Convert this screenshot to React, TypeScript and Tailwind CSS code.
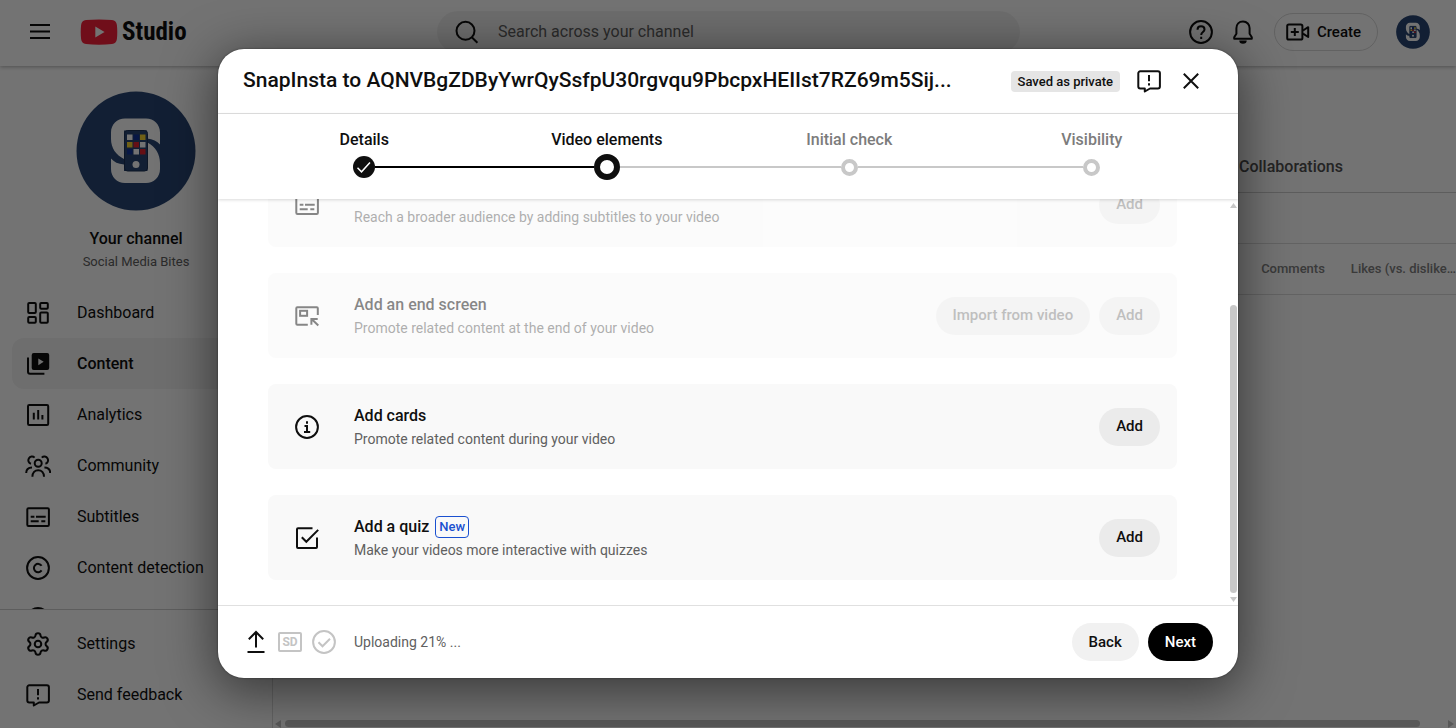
import React, { FC, ReactNode } from 'react';
import { Settings } from 'lucide-react';

type IconProps = {
	children: ReactNode;
	className?: string;
};

const Icon: FC<IconProps> = ({ children, className = '' }) => (
	<svg
		viewBox="0 0 26 26"
		className={`size-[26px] shrink-0 ${className}`}
		fill="none"
		stroke="currentColor"
		strokeWidth="2"
		aria-hidden="true"
	>
		{children}
	</svg>
);

const DashboardIcon = () => (
	<Icon>
		<rect x="3.2" y="3" width="7.6" height="10" rx="1" />
		<rect x="15.2" y="3" width="7.6" height="5.8" rx="1" />
		<rect x="3.2" y="17" width="7.6" height="5.8" rx="1" />
		<rect x="15.2" y="12.4" width="7.6" height="10.4" rx="1" />
	</Icon>
);

const ContentIcon = () => (
	<Icon>
		<path
			fill="currentColor"
			stroke="none"
			fillRule="evenodd"
			d="M8.7 2h13.5a2 2 0 0 1 2 2v13a2 2 0 0 1-2 2H8.7a2 2 0 0 1-2-2V4a2 2 0 0 1 2-2Zm4.6 5.4v6.8l5.4-3.4Z"
		/>
		<path d="M3 6.5v14.2a2 2 0 0 0 2 2h14.4" />
	</Icon>
);

const AnalyticsIcon = () => (
	<Icon>
		<rect x="3" y="3" width="20.2" height="20" rx="1.2" />
		<path d="M8.8 10.7v6.8M13.2 8v9.5M17.4 13v4.5" />
	</Icon>
);

const CommunityIcon = () => (
	<Icon>
		<circle cx="13.2" cy="10.2" r="3.5" />
		<path d="M7.4 23.8c0-4.2 2.5-6.6 5.8-6.6s5.8 2.4 5.8 6.6" />
		<path d="M9.6 4.6A3.7 3.7 0 1 0 6 10.8M16.8 4.6a3.7 3.7 0 1 1 3.600 6.200" />
		<path d="M1.200 20c0-3.400 2-5.600 5.800-5.600M25.200 20c0-3.400-2-5.600-5.800-5.600" />
	</Icon>
);

const SubtitlesIcon = () => (
	<Icon>
		<rect x="2.3" y="4.3" width="21.6" height="17.6" rx="1.2" />
		<path d="M5.7 12.8h3.7M11 12.8h9.7M5.7 17.3h8M16.3 17.3h4" />
	</Icon>
);

const CopyrightIcon = () => (
	<Icon>
		<circle cx="13" cy="13" r="10.9" />
		<path d="M16.6 10.7a4.2 4.2 0 1 0 0 4.7" />
	</Icon>
);

const FeedbackIcon = () => (
	<Icon>
		<path
			strokeLinejoin="round"
			d="M4.3 3.3h17.6a2 2 0 0 1 2 2v13.2a2 2 0 0 1-2 2H14l-5.2 3v-3H4.3a2 2 0 0 1-2-2V5.3a2 2 0 0 1 2-2Z"
		/>
		<path d="M13 7v6.2M13 15.2v2.2" />
	</Icon>
);

const HelpIcon = () => (
	<Icon>
		<circle cx="13" cy="13" r="10.9" />
		<path d="M9.5 10.7c0-2 1.5-3.4 3.5-3.4s3.5 1.3 3.5 3.2c0 2.5-3.3 2.6-3.3 5.4M13.2 17.7V20" />
	</Icon>
);

const BellIcon = () => (
	<Icon>
		<path
			strokeLinejoin="round"
			d="M13 2.6c-4 0-6.6 2.8-6.6 6.7v5.5l-2.2 3.4v1.6h17.6v-1.6l-2.2-3.4V9.3c0-3.9-2.6-6.7-6.6-6.7Z"
		/>
		<path fill="currentColor" stroke="none" d="M9.3 21.5h7.4a3.7 3.2 0 0 1-7.4 0Z" />
	</Icon>
);

const CreateIcon = () => (
	<Icon>
		<rect x="2.2" y="5.5" width="15.2" height="15" rx="1.6" />
		<path d="M9.8 9v8M5.8 13h8" />
		<path strokeLinejoin="round" d="M18 11.5l5.2-3.3v9.8L18 14.7" />
	</Icon>
);

const SearchIcon = () => (
	<Icon>
		<circle cx="11.5" cy="11.8" r="9" />
		<path d="M17.8 18.2l5.6 5.6" />
	</Icon>
);

const EndScreenIcon = () => (
	<Icon>
		<path d="M23.8 12V5.3a1 1 0 0 0-1-1H3.3a1 1 0 0 0-1 1v15.4a1 1 0 0 0 1 1h10.5" />
		<rect x="6.1" y="7.8" width="7" height="5" />
		<path d="M17.4 21.8v-5.9h6.3M17.6 16.1l6.7 6.3" />
	</Icon>
);

const InfoIcon = () => (
	<Icon>
		<circle cx="13" cy="13" r="10.9" />
		<path d="M13 7.3v2.4M10.5 12H13v6.3M10 18h6.2" />
	</Icon>
);

const QuizIcon = () => (
	<Icon>
		<path d="M18.5 3.3H4a1 1 0 0 0-1 1V22a1 1 0 0 0 1 1h18a1 1 0 0 0 1-1v-9.5" />
		<path d="M7.8 12.3l4.5 4.5L24.2 4.9" />
	</Icon>
);

const Logo: FC<{ className: string }> = ({ className }) => (
	<svg viewBox="0 0 120 120" className={`shrink-0 ${className}`} aria-hidden="true">
		<circle cx="60" cy="60" r="59.5" fill="#294673" />
		<path
			fill="#fff"
			d="M49 27.500h21c8 0 14 6 14 14v12c-3-3.500-7-5.500-13-6v-8H48v28.500c-8-4-13-11-13-20v-6.500c0-8 6-14 14-14Z"
		/>
		<path
			fill="#fff"
			d="M35 67.500c3 3.500 7 5.500 13 6V80h23.500V51.500C79.500 56 84 63 84 72v6c0 8-6 14-14 14H49c-8 0-14-6-14-14Z"
		/>
		<rect x="48.5" y="39.5" width="23" height="40.5" rx="3" fill="#294673" stroke="#1b3155" />
		<path fill="#fff" d="M51 43.500h5.500v5.500H51zM64 51h5.500v5.500H64zM57.500 58H63v5.500h-5.500z" />
		<path fill="#f5d432" d="M64 43.500h5.500v5.500H64zM51 51h5.500v5.500H51z" />
		<path fill="#e0242f" d="M57.500 51H63v5.500h-5.500zM64 58h5.500v5.500H64z" />
		<path fill="#10339a" d="M57.500 43.500H63v5.500h-5.500zM51 58h5.500v5.500H51z" />
		<circle cx="60" cy="73.5" r="3.5" fill="#fff" />
	</svg>
);

const TopBar = () => (
	<header className="relative z-10 flex h-[66px] shrink-0 items-center bg-white pr-[26px] pb-[2px] pl-[27px] shadow-[0_1px_4px_rgba(0,0,0,0.3)]">
		<div className="flex flex-1 items-center">
			<button type="button" aria-label="Menu">
				<Icon>
					<path d="M3 6h20M3 12.5h20M3 19h20" />
				</Icon>
			</button>
			<a href="#" className="ml-[27px] flex items-center gap-1">
				<svg viewBox="0 0 38 26" className="h-[26px] w-[38px]" aria-hidden="true">
					<path
						fill="#f8203a"
						d="M6 .9C14 .2 24 .2 32 .9c3 .3 4.500 2 4.900 5 .5 4.500.5 9.700 0 14.200-.4 3-1.900 4.700-4.900 5-8 .7-18 .7-26 0-3-.3-4.500-2-4.900-5-.5-4.500-.5-9.700 0-14.200.4-3 1.900-4.700 4.900-5Z"
					/>
					<path fill="#fff" d="M15.3 7.5v11l9.300-5.500Z" />
				</svg>
				<span className="font-['Roboto_Condensed','Liberation_Sans_Narrow','Roboto',sans-serif] text-[25px] leading-8 font-bold">
					Studio
				</span>
			</a>
		</div>
		<div className="flex h-[42px] w-[583px] items-center gap-[18px] rounded-full bg-[#f2f2f2] pl-[17px]">
			<SearchIcon />
			<input
				type="search"
				aria-label="Search across your channel"
				placeholder="Search across your channel"
				className="flex-1 bg-transparent text-base outline-none placeholder:text-[#606060]"
			/>
		</div>
		<div className="flex flex-1 items-center justify-end gap-[18px]">
			<div className="flex items-center gap-4">
				<button type="button" aria-label="Help">
					<HelpIcon />
				</button>
				<button type="button" aria-label="Notifications">
					<BellIcon />
				</button>
			</div>
			<button
				type="button"
				className="flex h-[38px] items-center gap-[6px] rounded-full border border-[#d9d9d9] pr-4 pl-[10px] text-[15px] font-medium"
			>
				<CreateIcon />
				Create
			</button>
			<button type="button" aria-label="Account">
				<Logo className="size-[34px]" />
			</button>
		</div>
	</header>
);

type NavItemProps = {
	icon: ReactNode;
	label: string;
	active?: boolean;
};

const NavItem: FC<NavItemProps> = ({ icon, label, active }) => (
	<a
		href="#"
		className={`mx-3 flex h-[51px] shrink-0 items-center gap-[26px] rounded-xl pl-[13px] text-base ${
			active ? 'bg-[#f4f4f4] font-medium' : ''
		}`}
	>
		{icon}
		{label}
	</a>
);

const Sidebar = () => (
	<aside className="flex w-[273px] shrink-0 flex-col border-r border-[#dcdcdc]">
		<nav className="flex min-h-0 flex-1 flex-col overflow-hidden pt-[25px]">
			<div className="mb-[14px] flex shrink-0 flex-col items-center">
				<Logo className="size-[120px]" />
				<div className="mt-4 text-base font-medium">Your channel</div>
				<div className="text-[13px] leading-[22px] text-[#606060]">Social Media Bites</div>
			</div>
			<NavItem icon={<DashboardIcon />} label="Dashboard" />
			<NavItem icon={<ContentIcon />} label="Content" active />
			<NavItem icon={<AnalyticsIcon />} label="Analytics" />
			<NavItem icon={<CommunityIcon />} label="Community" />
			<NavItem icon={<SubtitlesIcon />} label="Subtitles" />
			<NavItem icon={<CopyrightIcon />} label="Content detection" />
			<NavItem icon={<CopyrightIcon />} label="" />
		</nav>
		<nav className="border-t border-[#cfcfcf] py-2">
			<NavItem
				icon={<Settings size={26} strokeWidth={1.9} className="shrink-0" />}
				label="Settings"
			/>
			<NavItem icon={<FeedbackIcon />} label="Send feedback" />
		</nav>
	</aside>
);

const ContentTable = () => (
	<main className="flex min-w-0 flex-1 flex-col overflow-hidden">
		<div className="flex h-[127px] items-end justify-end border-b border-[#cfcfcf] pr-[113px] pb-[13px] text-base font-medium text-[#505050]">
			<button type="button">Collaborations</button>
		</div>
		<div className="h-[51px] border-b border-[#dcdcdc]" />
		<table className="w-full border-b border-[#dcdcdc] text-left text-[13px] text-[#808080]">
			<thead>
				<tr className="h-[50px]">
					<th className="pr-[26px] text-right font-medium">Comments</th>
					<th className="w-[105px] font-medium whitespace-nowrap">Likes (vs. dislike…</th>
				</tr>
			</thead>
		</table>
		<div className="mt-auto flex h-[9px] items-center gap-1 px-[2px] text-[#c4c4c4]">
			<svg viewBox="0 0 6 8" className="h-2 w-[6px]" fill="currentColor" aria-hidden="true">
				<path d="M6 0v8L0 4Z" />
			</svg>
			<div className="mr-6 h-[7px] flex-1 rounded-full bg-current" />
			<svg viewBox="0 0 6 8" className="h-2 w-[6px]" fill="currentColor" aria-hidden="true">
				<path d="M0 0v8l6-4Z" />
			</svg>
		</div>
	</main>
);

type StepProps = {
	label: string;
	marker: ReactNode;
	left: string;
	right: string;
	muted?: boolean;
};

const Step: FC<StepProps> = ({ label, marker, left, right, muted }) => (
	<li className={`text-center text-base font-medium ${muted ? 'text-[#7c7c7c]' : ''}`}>
		{label}
		<div className="flex h-[30px] items-center">
			<div className={`h-[2px] flex-1 ${left}`} />
			{marker}
			<div className={`h-[2px] flex-1 ${right}`} />
		</div>
	</li>
);

const PendingMarker = () => (
	<div className="size-[17px] rounded-full border-4 border-[#c8c8c8]" />
);

const Stepper = () => (
	<ol className="relative z-10 grid h-[85px] shrink-0 grid-cols-4 bg-white px-[25px] pt-[14px] shadow-[0_1px_3px_rgba(0,0,0,0.15)]">
		<Step
			label="Details"
			left="bg-transparent"
			right="bg-black"
			marker={
				<svg viewBox="0 0 22 22" className="size-[22px]" fill="none" aria-hidden="true">
					<circle cx="11" cy="11" r="11" fill="#0f0f0f" />
					<path d="M4.5 11.8l4 4L17 6.5" stroke="#fff" strokeWidth="1.5" />
				</svg>
			}
		/>
		<Step
			label="Video elements"
			left="bg-black"
			right="bg-[#c8c8c8]"
			marker={<div className="size-[26px] rounded-full border-6 border-[#0f0f0f]" />}
		/>
		<Step
			label="Initial check"
			left="bg-[#c8c8c8]"
			right="bg-[#c8c8c8]"
			marker={<PendingMarker />}
			muted
		/>
		<Step
			label="Visibility"
			left="bg-[#c8c8c8]"
			right="bg-transparent"
			marker={<PendingMarker />}
			muted
		/>
	</ol>
);

type ElementCardProps = {
	icon: ReactNode;
	title: string;
	text: string;
	actions: string[];
	badge?: string;
	disabled?: boolean;
};

const ElementCard: FC<ElementCardProps> = ({ icon, title, text, actions, badge, disabled }) => (
	<li
		className={`flex h-[85px] shrink-0 items-center rounded-lg bg-[#f9f9f9] pr-[17px] pl-[26px] ${
			disabled ? 'opacity-50' : ''
		}`}
	>
		{icon}
		<div className="ml-[34px] flex-1 pt-[3px]">
			<div className="flex h-[22px] items-center gap-[6px] text-base font-medium">
				{title}
				{badge && (
					<span className="rounded-sm border border-[#1a50d0] px-[3px] text-[13px] leading-5 text-[#1a50d0]">
						{badge}
					</span>
				)}
			</div>
			<div className="text-sm leading-6 text-[#606060]">{text}</div>
		</div>
		<div className="flex gap-[9px]">
			{actions.map((action) => (
				<button
					key={action}
					type="button"
					disabled={disabled}
					className={`h-[38px] rounded-full bg-[#ebebeb] px-[17px] text-[15px] font-medium ${
						disabled ? 'text-[#808080]' : ''
					}`}
				>
					{action}
				</button>
			))}
		</div>
	</li>
);

const ElementList = () => (
	<div className="flex min-h-0 flex-1">
		<ul className="flex flex-1 flex-col justify-end gap-[26px] overflow-hidden pr-[53px] pb-[25px] pl-[50px]">
			<ElementCard
				icon={<SubtitlesIcon />}
				title="Add subtitles"
				text="Reach a broader audience by adding subtitles to your video"
				actions={['Add']}
				disabled
			/>
			<ElementCard
				icon={<EndScreenIcon />}
				title="Add an end screen"
				text="Promote related content at the end of your video"
				actions={['Import from video', 'Add']}
				disabled
			/>
			<ElementCard
				icon={<InfoIcon />}
				title="Add cards"
				text="Promote related content during your video"
				actions={['Add']}
			/>
			<ElementCard
				icon={<QuizIcon />}
				title="Add a quiz"
				badge="New"
				text="Make your videos more interactive with quizzes"
				actions={['Add']}
			/>
		</ul>
		<div className="mr-px flex w-[7px] flex-col pt-1 pb-[3px] text-[#c8c8c8]">
			<svg viewBox="0 0 7 5" className="h-[5px] w-[7px]" fill="currentColor" aria-hidden="true">
				<path d="M3.5 0 7 5H0Z" />
			</svg>
			<div className="mt-auto mb-1 h-[288px] rounded-full bg-current" />
			<svg viewBox="0 0 7 5" className="h-[5px] w-[7px]" fill="currentColor" aria-hidden="true">
				<path d="M0 0h7L3.5 5Z" />
			</svg>
		</div>
	</div>
);

const UploadDialog = () => (
	<div
		role="dialog"
		aria-labelledby="dialog-title"
		className="flex min-h-0 flex-1 flex-col overflow-hidden rounded-[26px] bg-white shadow-[0_0_2px_rgba(0,0,0,0.5),0_10px_50px_4px_rgba(0,0,0,0.5)]"
	>
		<div className="flex h-[65px] shrink-0 items-center border-b border-[#e0e0e0] pr-[34px] pl-[25px]">
			<h1 id="dialog-title" className="mr-auto text-[21px] font-medium whitespace-nowrap">
				SnapInsta to AQNVBgZDByYwrQySsfpU30rgvqu9PbcpxHEIIst7RZ69m5Sij...
			</h1>
			<span className="rounded-sm bg-[#e5e5e5] px-[7px] text-[13px] leading-[21px] font-medium whitespace-nowrap">
				Saved as private
			</span>
			<button type="button" aria-label="Send feedback" className="ml-4">
				<FeedbackIcon />
			</button>
			<button type="button" aria-label="Close" className="ml-4">
				<Icon>
					<path d="M5.8 5.8l14.4 14.4M20.2 5.8L5.8 20.2" />
				</Icon>
			</button>
		</div>
		<Stepper />
		<ElementList />
		<footer className="flex h-[73px] shrink-0 items-center border-t border-[#e0e0e0] px-[25px]">
			<div className="flex items-center gap-[9px] text-[#c4c4c4]">
				<Icon className="text-[#0f0f0f]">
					<path d="M13 18.5V3M5.8 10.2L13 3l7.2 7.2M4.5 23h17" />
				</Icon>
				<span className="flex h-5 w-6 items-center justify-center rounded-xs border-2 text-[12px] font-bold">
					SD
				</span>
				<Icon>
					<circle cx="13" cy="13" r="10.9" />
					<path d="M7.5 13.3l4 4 7.5-7.5" />
				</Icon>
			</div>
			<span className="mr-auto ml-[17px] text-sm text-[#606060]">Uploading 21% ...</span>
			<button
				type="button"
				className="h-[38px] rounded-full bg-[#f1f1f1] px-[17px] text-[15px] font-medium"
			>
				Back
			</button>
			<button
				type="button"
				className="ml-[9px] h-[38px] rounded-full bg-black px-[17px] text-[15px] font-medium text-white"
			>
				Next
			</button>
		</footer>
	</div>
);

const App: FC = () => (
	<div className="relative flex h-screen flex-col overflow-hidden bg-white font-['Roboto',sans-serif] text-[#0f0f0f]">
		<TopBar />
		<div className="flex min-h-0 flex-1">
			<Sidebar />
			<ContentTable />
		</div>
		<div className="absolute inset-0 z-20 flex flex-col bg-black/55 px-[218px] pt-[49px] pb-[50px]">
			<UploadDialog />
		</div>
	</div>
);

export default App;
